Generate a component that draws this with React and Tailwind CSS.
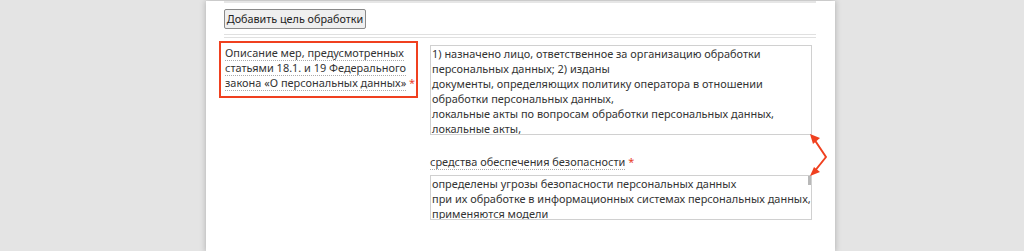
export default function App() {
  return (
    <div className="w-[1024px] h-[251px] bg-[#e4e4e4] overflow-hidden relative font-['Noto_Sans','Open_Sans',sans-serif]">
      <div className="ml-[206px] w-[629px] h-[251px] bg-white shadow-[0_0_6px_rgba(0,0,0,0.25)] pl-[18px] pr-[19px] text-[10.95px] leading-[15px] text-[#333]">
        <div className="h-[2px] mt-[1px] bg-[#e6e6e6]" />
        <div className="pt-[6px]">
          <button className="h-[20px] w-[142px] border border-[#8a8a8a] rounded-[2px] bg-[#efefef] text-[10.8px] leading-[16px] text-[#222] font-['Noto_Sans',sans-serif]">
            Добавить цель обработки
          </button>
        </div>
        <div className="mt-[5px] border-t border-b border-[#e0e0e0] h-[4px]" />
        <div className="flex mt-[3px]">
          <div className="w-[206px] -ml-[5px] shrink-0">
            <div className="w-[199px] h-[57px] border-2 border-[#f0401f] pl-[4px] pt-[2px] whitespace-nowrap">
              <span className="border-b border-dotted border-[#aaa]">Описание мер, предусмотренных</span><br />
              <span className="border-b border-dotted border-[#aaa]">статьями 18.1. и 19 Федерального</span><br />
              <span className="border-b border-dotted border-[#aaa]">закона «О персональных данных»</span>{' '}
              <span className="text-[#e8402a]">*</span>
            </div>
          </div>
          <div className="flex flex-col pt-[4px] ml-[5px]">
            <div className="w-[382px] h-[90px] border border-[#d0d0d0] pl-[1px] whitespace-pre overflow-hidden">
              {"1) назначено лицо, ответственное за организацию обработки\nперсональных данных; 2) изданы\nдокументы, определяющих политику оператора в отношении\nобработки персональных данных,\nлокальные акты по вопросам обработки персональных данных,\nлокальные акты,"}
            </div>
            <div className="mt-[19px]">
              <span className="border-b border-dotted border-[#aaa]">средства обеспечения безопасности</span>{' '}
              <span className="text-[#e8402a]">*</span>
            </div>
            <div className="relative mt-[6px] w-[382px] h-[45px] border border-[#d0d0d0] pl-[1px] whitespace-pre overflow-hidden">
              {"определены угрозы безопасности персональных данных\nпри их обработке в информационных системах персональных данных,\nприменяются модели"}
              <div className="absolute right-0 top-0 w-[3px] h-[9px] bg-[#b8b8b8]" />
            </div>
          </div>
        </div>
      </div>
      <svg className="absolute left-0 top-0" width="1024" height="251" viewBox="0 0 1024 251">
        <g stroke="#f0401f" strokeWidth="2" fill="none" strokeLinejoin="round">
          <polyline points="814,139 826,157 814,172" />
        </g>
        <polygon points="810,134 820,138 813,144" fill="#f0401f" />
        <polygon points="810,176 814,167 820,172" fill="#f0401f" />
      </svg>
    </div>
  );
}
